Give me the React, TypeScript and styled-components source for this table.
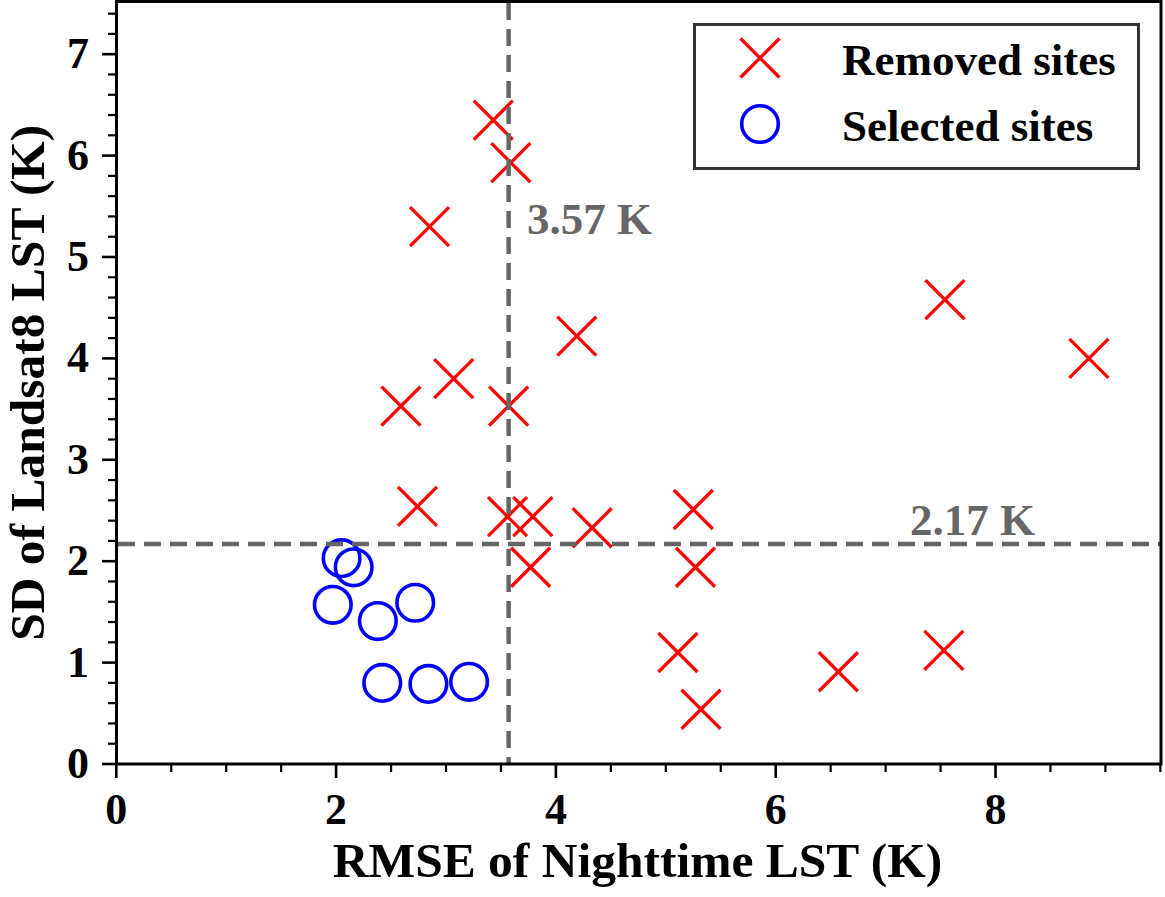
import React from 'react';
import styled, { createGlobalStyle } from 'styled-components';

const GlobalStyle = createGlobalStyle`
  html, body { margin: 0; padding: 0; background: #ffffff; }
  body {
    width: 1165px;
    height: 897px;
    overflow: hidden;
    font-family: "Liberation Serif", "Times New Roman", serif;
  }
`;

// data -> page pixel mapping
const X0 = 116.3;
const SX = 109.9;
const Y0 = 764;
const SY = 101.4;
const PLOT_LEFT = 116;
const px = (x: number) => X0 + x * SX;
const py = (y: number) => Y0 - y * SY;

const removed: [number, number][] = [
  [3.43, 6.35], [3.59, 5.93], [2.85, 5.3], [4.19, 4.22], [3.07, 3.8],
  [2.59, 3.53], [3.57, 3.53], [2.74, 2.54], [3.56, 2.44], [3.79, 2.44],
  [4.33, 2.33], [5.25, 2.51], [3.77, 1.94], [5.27, 1.94], [5.11, 1.1],
  [5.32, 0.54], [6.57, 0.91], [7.53, 1.12], [7.54, 4.58], [8.85, 4.0],
];

const selected: [number, number][] = [
  [2.05, 2.03], [2.16, 1.94], [1.97, 1.57], [2.38, 1.41], [2.72, 1.59],
  [2.42, 0.8], [2.84, 0.79], [3.21, 0.81],
];

const RED = '#ff0000';
const BLUE = '#0000ff';
const GRAY = '#666666';
const HALF = 19.5;

const Figure = styled.div`
  display: grid;
  grid-template-columns: 62px 54px 1049px;
  grid-template-rows: 766px 62px 69px;
  width: 1165px;
  height: 897px;
  background: #ffffff;
  color: #000000;
`;

const YTitleCell = styled.div`
  grid-column: 1;
  grid-row: 1;
  display: flex;
  align-items: center;
  justify-content: center;
  overflow: visible;
`;

const YTitle = styled.span`
  display: block;
  white-space: nowrap;
  font-weight: 700;
  font-size: 49.5px;
  line-height: 1;
  transform: translateX(-3px) rotate(-90deg);
  flex: none;
`;

const YTickColumn = styled.div`
  grid-column: 2;
  grid-row: 1;
  position: relative;
`;

const YTickLabel = styled.span`
  position: absolute;
  right: 27px;
  font-weight: 700;
  font-size: 44px;
  line-height: 44px;
  transform: translateY(-50%);
`;

const PlotCell = styled.div`
  grid-column: 3;
  grid-row: 1;
  position: relative;
`;

const PlotSvg = styled.svg`
  display: block;
  overflow: visible;
`;

const XTickRow = styled.div`
  grid-column: 2 / 4;
  grid-row: 2;
  position: relative;
`;

const XTickLabel = styled.span`
  position: absolute;
  top: 22px;
  font-weight: 700;
  font-size: 44px;
  line-height: 44px;
  transform: translateX(-50%);
`;

const XTitleCell = styled.div`
  grid-column: 3;
  grid-row: 3;
  display: flex;
  justify-content: center;
  padding-top: 8px;
  padding-right: 6px;
`;

const XTitle = styled.span`
  font-weight: 700;
  font-size: 49.5px;
  line-height: 1;
  white-space: nowrap;
`;

const Annotation = styled.span<{ $left: number; $top: number }>`
  position: absolute;
  left: ${(p) => p.$left}px;
  top: ${(p) => p.$top}px;
  font-weight: 700;
  font-size: 45px;
  line-height: 45px;
  color: ${GRAY};
  white-space: nowrap;
`;

const Legend = styled.div`
  position: absolute;
  left: 577px;
  top: 23px;
  width: 447px;
  height: 147px;
  box-sizing: border-box;
  border: 3.5px solid #333333;
  background: #ffffff;
  display: flex;
  flex-direction: column;
  gap: 2px;
  padding-left: 42px;
`;

const LegendRow = styled.div`
  height: 64px;
  display: flex;
  align-items: center;
  gap: 60px;
`;

const LegendMarker = styled.svg`
  display: block;
  flex: none;
  width: 44px;
  height: 44px;
`;

const LegendText = styled.span`
  font-weight: 700;
  font-size: 45px;
  line-height: 45px;
  white-space: nowrap;
  padding-top: 4px;
`;

const Cross: React.FC<{ cx: number; cy: number }> = ({ cx, cy }) => (
  <g stroke={RED} strokeWidth={3.3}>
    <line x1={cx - HALF} y1={cy - HALF} x2={cx + HALF} y2={cy + HALF} />
    <line x1={cx - HALF} y1={cy + HALF} x2={cx + HALF} y2={cy - HALF} />
  </g>
);

const Ring: React.FC<{ cx: number; cy: number }> = ({ cx, cy }) => (
  <circle cx={cx} cy={cy} r={18.3} fill="none" stroke={BLUE} strokeWidth={3.6} />
);

const yMajor = [0, 1, 2, 3, 4, 5, 6, 7];
const yMinor = Array.from({ length: 38 }, (_, i) => i * 0.2).filter(
  (v) => Math.abs(v - Math.round(v)) > 0.01
);
const xMajor = [0, 2, 4, 6, 8];
const xMinor = Array.from({ length: 20 }, (_, i) => i * 0.5).filter(
  (v) => v % 2 !== 0
);

const VLINE = 3.57;
const HLINE = 2.17;

export default function App() {
  return (
    <>
      <GlobalStyle />
      <Figure>
        <YTitleCell>
          <YTitle>SD of Landsat8 LST (K)</YTitle>
        </YTitleCell>
        <YTickColumn>
          {yMajor.map((v) => (
            <YTickLabel key={v} style={{ top: py(v) }}>
              {v}
            </YTickLabel>
          ))}
        </YTickColumn>
        <PlotCell>
          <PlotSvg width={1049} height={766} viewBox={`${PLOT_LEFT} 0 1049 766`}>
            {/* ticks */}
            <g stroke="#000" strokeWidth={2.6}>
              {yMajor.map((v) => (
                <line key={`ym${v}`} x1={102} x2={117} y1={py(v)} y2={py(v)} />
              ))}
              {xMajor.map((v) => (
                <line key={`xm${v}`} x1={px(v)} x2={px(v)} y1={763} y2={778} />
              ))}
            </g>
            <g stroke="#000" strokeWidth={2.2}>
              {yMinor.map((v) => (
                <line key={`yn${v}`} x1={108} x2={117} y1={py(v)} y2={py(v)} />
              ))}
              {xMinor.map((v) => (
                <line key={`xn${v}`} x1={px(v)} x2={px(v)} y1={763} y2={772} />
              ))}
            </g>
            {/* data */}
            {removed.map(([x, y], i) => (
              <Cross key={`r${i}`} cx={px(x)} cy={py(y)} />
            ))}
            {selected.map(([x, y], i) => (
              <Ring key={`s${i}`} cx={px(x)} cy={py(y)} />
            ))}
            {/* threshold lines */}
            <line
              x1={px(VLINE)}
              x2={px(VLINE)}
              y1={3}
              y2={764}
              stroke={GRAY}
              strokeWidth={4.5}
              strokeDasharray="17 9"
            />
            <line
              x1={118}
              x2={1160}
              y1={py(HLINE)}
              y2={py(HLINE)}
              stroke={GRAY}
              strokeWidth={4.5}
              strokeDasharray="17 9"
            />
            {/* spines */}
            <rect
              x={116.5}
              y={1.5}
              width={1044.5}
              height={762.5}
              fill="none"
              stroke="#000"
              strokeWidth={3}
            />
          </PlotSvg>
          <Annotation $left={411} $top={197}>
            3.57 K
          </Annotation>
          <Annotation $left={794} $top={498}>
            2.17 K
          </Annotation>
          <Legend>
            <LegendRow>
              <LegendMarker viewBox="0 0 44 44">
                <g stroke={RED} strokeWidth={3.3}>
                  <line x1={2.5} y1={2.5} x2={41.5} y2={41.5} />
                  <line x1={2.5} y1={41.5} x2={41.5} y2={2.5} />
                </g>
              </LegendMarker>
              <LegendText>Removed sites</LegendText>
            </LegendRow>
            <LegendRow>
              <LegendMarker viewBox="0 0 44 44">
                <circle cx={22} cy={22} r={18.3} fill="none" stroke={BLUE} strokeWidth={3.6} />
              </LegendMarker>
              <LegendText>Selected sites</LegendText>
            </LegendRow>
          </Legend>
        </PlotCell>
        <XTickRow>
          {xMajor.map((v) => (
            <XTickLabel key={v} style={{ left: px(v) - 62 }}>
              {v}
            </XTickLabel>
          ))}
        </XTickRow>
        <XTitleCell>
          <XTitle>RMSE of Nighttime LST (K)</XTitle>
        </XTitleCell>
      </Figure>
    </>
  );
}
